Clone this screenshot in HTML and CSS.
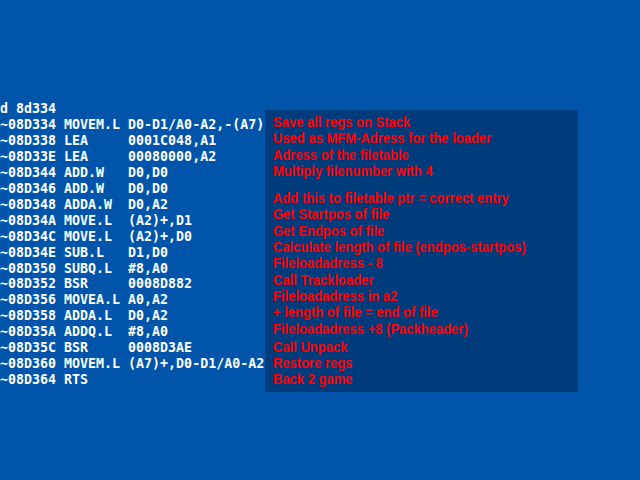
FILE: index.html
```html
<!DOCTYPE html>
<html>
<head>
<meta charset="utf-8">
<link rel="stylesheet" href="styles.css">
</head>
<body>
<div class="screen">
<pre class="listing"><span class="ln">d 8d334</span>
<span class="ln">~08D334 MOVEM.L D0-D1/A0-A2,-(A7)</span>
<span class="ln">~08D338 LEA     0001C048,A1</span>
<span class="ln">~08D33E LEA     00080000,A2</span>
<span class="ln">~08D344 ADD.W   D0,D0</span>
<span class="ln">~08D346 ADD.W   D0,D0</span>
<span class="ln">~08D348 ADDA.W  D0,A2</span>
<span class="ln">~08D34A MOVE.L  (A2)+,D1</span>
<span class="ln">~08D34C MOVE.L  (A2)+,D0</span>
<span class="ln">~08D34E SUB.L   D1,D0</span>
<span class="ln">~08D350 SUBQ.L  #8,A0</span>
<span class="ln">~08D352 BSR     0008D882</span>
<span class="ln">~08D356 MOVEA.L A0,A2</span>
<span class="ln">~08D358 ADDA.L  D0,A2</span>
<span class="ln">~08D35A ADDQ.L  #8,A0</span>
<span class="ln">~08D35C BSR     0008D3AE</span>
<span class="ln">~08D360 MOVEM.L (A7)+,D0-D1/A0-A2</span>
<span class="ln">~08D364 RTS</span></pre>
<div class="notes">
<div class="note">Save all regs on Stack</div>
<div class="note">Used as MFM-Adress for the loader</div>
<div class="note">Adress of the filetable</div>
<div class="note">Multiply filenumber with 4</div>
<div class="note gap">Add this to filetable ptr = correct entry</div>
<div class="note">Get Startpos of file</div>
<div class="note">Get Endpos of file</div>
<div class="note">Calculate length of file (endpos-startpos)</div>
<div class="note">Fileloadadress - 8</div>
<div class="note">Call Trackloader</div>
<div class="note">Fileloadadress in a2</div>
<div class="note">+ length of file = end of file</div>
<div class="note">Fileloadadress +8 (Packheader)</div>
<div class="note gap2">Call Unpack</div>
<div class="note">Restore regs</div>
<div class="note">Back 2 game</div>
</div>
</div>
</body>
</html>
```

FILE: styles.css
```css
html, body {
  margin: 0;
  padding: 0;
  background: #0055aa;
}
.screen {
  position: relative;
  width: 640px;
  height: 480px;
  overflow: hidden;
  background: #0055aa;
}
.listing {
  margin: 0;
  padding: 101px 0 0 0;
  font-family: "DejaVu Sans Mono", monospace;
  font-weight: bold;
  font-size: 13.3px;
  line-height: 15.95px;
  color: #ffffff;
  white-space: pre;
}
.ln {
  display: inline-block;
  transform: scaleY(1.12);
  transform-origin: 50% 60%;
}
.notes {
  position: absolute;
  left: 265px;
  top: 110px;
  width: 313px;
  height: 282px;
  box-sizing: border-box;
  padding: 5px 0 0 8px;
  background: #003c7c;
  font-family: "Liberation Sans", Arial, sans-serif;
  font-weight: bold;
  font-size: 13px;
  line-height: 16.3px;
  color: #ff0000;
}
.note {
  white-space: nowrap;
  transform: scaleY(1.15);
  transform-origin: 0 60%;
}
.gap {
  margin-top: 11px;
}
.gap2 {
  margin-top: 2px;
}
```
